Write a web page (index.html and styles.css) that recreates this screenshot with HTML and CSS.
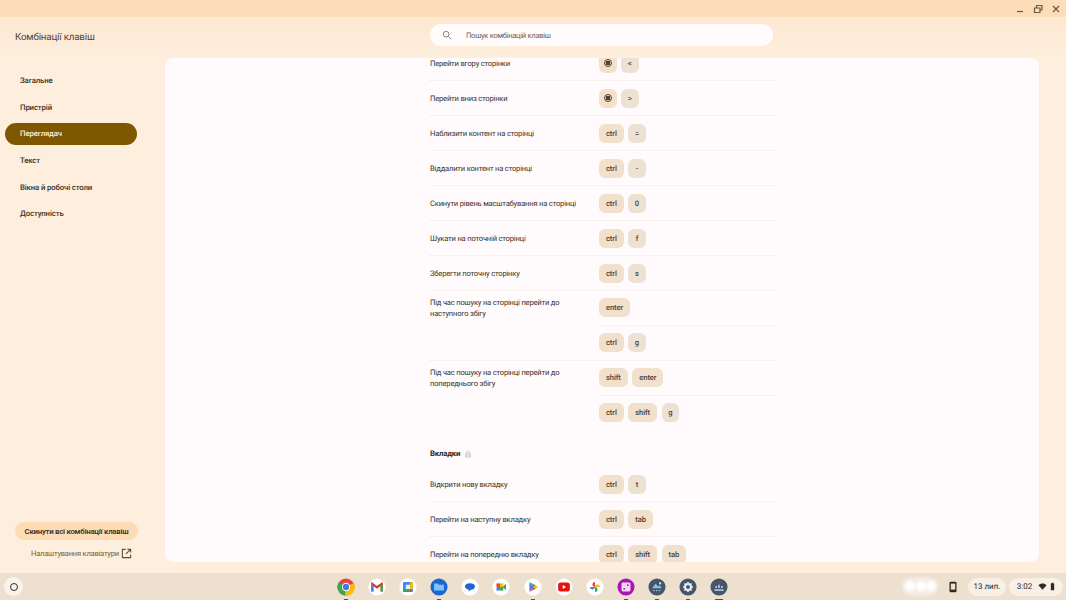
FILE: index.html
```html
<!DOCTYPE html>
<html lang="uk">
<head>
<meta charset="utf-8">
<title>Комбінації клавіш</title>
<link rel="stylesheet" href="styles.css">
</head>
<body>
<div class="titlebar">
  <svg class="win-icon" viewBox="0 0 10 10"><path d="M2 7.500h6" /></svg>
  <svg class="win-icon" viewBox="0 0 10 10"><path d="M1.500 4h5.500v4.500h-5.500zM3.500 4V1.500h5.500V6H7" /></svg>
  <svg class="win-icon" viewBox="0 0 10 10"><path d="M2 2l6 6M8 2l-6 6" /></svg>
</div>
<div class="app">
  <aside class="sidebar">
    <h1 class="app-title">Комбінації клавіш</h1>
    <nav class="nav">
      <a class="nav-item">Загальне</a>
      <a class="nav-item">Пристрій</a>
      <a class="nav-item active">Переглядач</a>
      <a class="nav-item">Текст</a>
      <a class="nav-item">Вікна й робочі столи</a>
      <a class="nav-item">Доступність</a>
    </nav>
    <div class="side-foot">
      <button class="reset">Скинути всі комбінації клавіш</button>
      <a class="kb-link"><span>Налаштування клавіатури</span><svg class="ext" viewBox="0 0 12 12"><path d="M5 1.500H1.500v9h9V7M7 1.500h3.500V5M10.500 1.500L5.500 6.500" /></svg></a>
    </div>
  </aside>
  <main class="main">
    <header class="search-wrap">
      <div class="search">
        <svg class="search-icon" viewBox="0 0 12 12"><circle cx="5" cy="5" r="3.400" /><path d="M7.500 7.500l3.500 3.500" /></svg>
        <span>Пошук комбінацій клавіш</span>
      </div>
    </header>
    <section class="panel">
      <div class="list">
        <div class="row"><div class="label">Перейти вгору сторінки</div><div class="keys"><div class="combo"><span class="key sq launcher-key"><i class="dot"></i></span><span class="key sq glyph">&lt;</span></div></div></div>
        <div class="row"><div class="label">Перейти вниз сторінки</div><div class="keys"><div class="combo"><span class="key sq launcher-key"><i class="dot"></i></span><span class="key sq glyph">&gt;</span></div></div></div>
        <div class="row"><div class="label">Наблизити контент на сторінці</div><div class="keys"><div class="combo"><span class="key">ctrl</span><span class="key sq">=</span></div></div></div>
        <div class="row"><div class="label">Віддалити контент на сторінці</div><div class="keys"><div class="combo"><span class="key">ctrl</span><span class="key sq">-</span></div></div></div>
        <div class="row"><div class="label">Скинути рівень масштабування на сторінці</div><div class="keys"><div class="combo"><span class="key">ctrl</span><span class="key sq">0</span></div></div></div>
        <div class="row"><div class="label">Шукати на поточній сторінці</div><div class="keys"><div class="combo"><span class="key">ctrl</span><span class="key sq">f</span></div></div></div>
        <div class="row"><div class="label">Зберегти поточну сторінку</div><div class="keys"><div class="combo"><span class="key">ctrl</span><span class="key sq">s</span></div></div></div>
        <div class="row multi"><div class="label">Під час пошуку на сторінці перейти до наступного збігу</div><div class="keys"><div class="combo"><span class="key">enter</span></div><div class="combo"><span class="key">ctrl</span><span class="key sq">g</span></div></div></div>
        <div class="row multi last"><div class="label">Під час пошуку на сторінці перейти до попереднього збігу</div><div class="keys"><div class="combo"><span class="key">shift</span><span class="key">enter</span></div><div class="combo"><span class="key">ctrl</span><span class="key">shift</span><span class="key sq">g</span></div></div></div>
        <h2 class="section">Вкладки
          <svg class="lock" viewBox="0 0 10 10"><path d="M2 4.500h6v4.500H2zM3.300 4.500V3a1.700 1.700 0 0 1 3.400 0v1.500M2 6.200h6M2 7.600h6" /></svg>
        </h2>
        <div class="row"><div class="label">Відкрити нову вкладку</div><div class="keys"><div class="combo"><span class="key">ctrl</span><span class="key sq">t</span></div></div></div>
        <div class="row"><div class="label">Перейти на наступну вкладку</div><div class="keys"><div class="combo"><span class="key">ctrl</span><span class="key">tab</span></div></div></div>
        <div class="row"><div class="label">Перейти на попередню вкладку</div><div class="keys"><div class="combo"><span class="key">ctrl</span><span class="key">shift</span><span class="key">tab</span></div></div></div>
      </div>
    </section>
  </main>
</div>
<footer class="shelf">
  <div class="launcher"><i class="ring"></i></div>
  <div class="dock">
    <div class="app-icon run">
      <svg viewBox="0 0 20 20"><circle cx="10" cy="10" r="9.500" fill="#e8453c"/><path d="M10 10L1.800 14.800A9.500 9.500 0 0 1 2 5z" fill="#34a853"/><path d="M10 10l8.400-4.400A9.500 9.500 0 0 1 9 19.500L1.800 14.800z" fill="#fbbc04"/><path d="M10 10l-1 9.500a9.500 9.500 0 0 1-7.200-4.700z" fill="#34a853"/><circle cx="10" cy="10" r="4.600" fill="#fff"/><circle cx="10" cy="10" r="3.500" fill="#3b7de8"/></svg>
    </div>
    <div class="app-icon">
      <svg viewBox="0 0 20 20"><circle cx="10" cy="10" r="9.500" fill="#fff"/><path d="M4.800 15V6.500l5.200 4 5.200-4V15" fill="none" stroke="#d9342b" stroke-width="2.400"/><path d="M4.800 15V7.500" stroke="#4285f4" stroke-width="2.400"/><path d="M15.200 15V7.500" stroke="#34a853" stroke-width="2.400"/></svg>
    </div>
    <div class="app-icon">
      <svg viewBox="0 0 20 20"><circle cx="10" cy="10" r="9.500" fill="#fff"/><rect x="4.500" y="4.500" width="11" height="11" fill="#4285f4"/><rect x="7.500" y="7.500" width="5" height="5" fill="#e6f0fb"/><path d="M12.500 12.500h3l-3 3z" fill="#ea4335"/><rect x="4.500" y="12.500" width="8" height="3" fill="#34a853"/><rect x="12.500" y="4.500" width="3" height="8" fill="#fbbc04"/></svg>
    </div>
    <div class="app-icon run">
      <svg viewBox="0 0 20 20"><circle cx="10" cy="10" r="9.500" fill="#1a67d2"/><path d="M4.500 6h4.200l1.300 1.500h5.500v6.500h-11z" fill="#7fc4f5"/></svg>
    </div>
    <div class="app-icon">
      <svg viewBox="0 0 20 20"><circle cx="10" cy="10" r="9.500" fill="#fff"/><path d="M4.500 9.500c0-2.300 2.400-3.600 5.500-3.600s5.500 1.300 5.500 3.600-2.400 3.600-4.500 3.600L8.500 15v-2.100c-2.300-.3-4-1.500-4-3.400z" fill="#1a67d2"/></svg>
    </div>
    <div class="app-icon">
      <svg viewBox="0 0 20 20"><circle cx="10" cy="10" r="9.500" fill="#fff"/><rect x="5" y="6" width="4" height="4" fill="#ea4335"/><rect x="5" y="10" width="4" height="4" fill="#4285f4"/><rect x="9" y="6" width="3.500" height="4" fill="#fbbc04"/><rect x="9" y="10" width="3.500" height="4" fill="#34a853"/><path d="M12.500 9l3-2.300v6.600l-3-2.300z" fill="#34a853"/></svg>
    </div>
    <div class="app-icon run">
      <svg viewBox="0 0 20 20"><circle cx="10" cy="10" r="9.500" fill="#fff"/><path d="M6 4.800v10.400L11 10z" fill="#4285f4"/><path d="M6 4.800L11 10l2-2z" fill="#34a853"/><path d="M6 15.200L11 10l2 2z" fill="#ea4335"/><path d="M13 8l2.600 2-2.600 2-2-2z" fill="#fbbc04"/></svg>
    </div>
    <div class="app-icon">
      <svg viewBox="0 0 20 20"><circle cx="10" cy="10" r="9.500" fill="#fff"/><rect x="3.500" y="5" width="13" height="10" rx="2.600" fill="#e8120c"/><path d="M8.600 7.800v4.400l3.600-2.200z" fill="#fff"/></svg>
    </div>
    <div class="app-icon">
      <svg viewBox="0 0 20 20"><circle cx="10" cy="10" r="9.500" fill="#fff"/><path d="M10 10V4.500a2.800 2.800 0 0 0-2.800 2.800c0 1.500 1.300 2.700 2.800 2.700z" fill="#ea4335"/><path d="M10 10h5.500a2.800 2.800 0 0 0-2.800-2.800C11.200 7.200 10 8.500 10 10z" fill="#fbbc04"/><path d="M10 10v5.500a2.800 2.800 0 0 0 2.800-2.800c0-1.500-1.300-2.700-2.800-2.700z" fill="#34a853"/><path d="M10 10H4.500a2.800 2.800 0 0 0 2.800 2.800c1.500 0 2.700-1.300 2.700-2.800z" fill="#4285f4"/></svg>
    </div>
    <div class="app-icon run">
      <svg viewBox="0 0 20 20"><circle cx="10" cy="10" r="9.500" fill="#a815b5"/><rect x="5" y="5" width="10" height="10" rx="1.600" fill="#f6d6f2"/><circle cx="12" cy="8" r="1" fill="#a815b5"/><circle cx="8" cy="12" r="1" fill="#a815b5"/></svg>
    </div>
    <div class="app-icon run">
      <svg viewBox="0 0 20 20"><circle cx="10" cy="10" r="9.500" fill="#475569"/><path d="M4.500 11.500L8.500 6.500l3 3 1.500-1.500 2.500 3.500z" fill="#7cc4f8"/><circle cx="13.500" cy="6" r="1.200" fill="#e4eefb"/><path d="M6 14h1.500M9 14h1.500M12 14h1.500" stroke="#dbe5f2" stroke-width="1"/></svg>
    </div>
    <div class="app-icon run">
      <svg viewBox="0 0 20 20"><circle cx="10" cy="10" r="9.500" fill="#475569"/><circle cx="10" cy="10" r="3.300" fill="none" stroke="#e8eef6" stroke-width="2.200"/><path d="M10 4.500v2M10 13.500v2M4.500 10h2M13.500 10h2M6.100 6.100l1.400 1.400M12.500 12.500l1.400 1.400M13.900 6.100l-1.400 1.400M7.500 12.500l-1.400 1.400" stroke="#e8eef6" stroke-width="1.800"/></svg>
    </div>
    <div class="app-icon run wide-run">
      <svg viewBox="0 0 20 20"><circle cx="10" cy="10" r="9.500" fill="#475569"/><path d="M5 12.500h10v1.800H5z" fill="#a9cdf2"/><path d="M6 9h1.500v2H6zM9.200 7.500h1.500v3.500H9.200zM12.500 9H14v2h-1.500z" fill="#cfe2f7"/></svg>
    </div>
  </div>
  <div class="tray">
    <div class="blob"></div>
    <svg class="phone" viewBox="0 0 10 12"><rect x="1.500" y="0.800" width="7" height="10.400" rx="1.200" fill="#2f2a24"/><rect x="2.800" y="2.600" width="4.400" height="6" fill="#efe1d0"/></svg>
    <div class="pill date">13 лип.</div>
    <div class="pill time">
      <span>3:02</span>
      <svg class="wifi" viewBox="0 0 10 10"><path d="M0.500 3.500C3 1 7 1 9.500 3.500L5 8.500z" fill="#2f2a24"/></svg>
      <svg class="batt" viewBox="0 0 6 10"><path d="M2 .5h2v1h1v8H1v-8h1z" fill="#2f2a24"/></svg>
    </div>
  </div>
</footer>
</body>
</html>
```
FILE: styles.css
```css
* { box-sizing: border-box; }
html, body { margin: 0; padding: 0; }
body {
  width: 1066px;
  height: 600px;
  overflow: hidden;
  display: flex;
  flex-direction: column;
  font-family: Roboto, Inter, sans-serif;
  text-rendering: geometricPrecision;
  color: #3a3229;
  background: #feeedd;
}
.titlebar {
  height: 17px;
  flex: none;
  background: #fddcb9;
  display: flex;
  justify-content: flex-end;
  align-items: center;
  gap: 8px;
  padding: 0 5px 0 0;
}
.win-icon {
  width: 10px;
  height: 10px;
  fill: none;
  stroke: #6a5a45;
  stroke-width: 1.200;
}
.app {
  flex: 1;
  display: flex;
  min-height: 0;
  background: linear-gradient(#fde8d1, #feeedd 41px);
}
.sidebar {
  width: 165px;
  flex: none;
  display: flex;
  flex-direction: column;
}
.app-title {
  margin: 14.500px 0 0 15px;
  font-size: 9.800px;
  letter-spacing: -.2px;
  line-height: 12px;
  font-weight: 400;
  color: #4f4539;
}
.nav {
  margin-top: 26.500px;
  display: flex;
  flex-direction: column;
  gap: 4.700px;
}
.nav-item {
  height: 22px;
  width: 132.500px;
  margin-left: 4.500px;
  padding-left: 15.500px;
  border-radius: 11px;
  font-size: 7.800px;
  letter-spacing: -.15px;
  line-height: 22px;
  font-weight: 500;
  color: #3a3229;
}
.nav-item.active { background: #7f5700; color: #fff0dc; }
.side-foot {
  margin-top: auto;
  padding: 0 0 14px 15px;
  display: flex;
  flex-direction: column;
  align-items: flex-start;
  gap: 8px;
}
.reset {
  width: 123px;
  height: 18px;
  border: 0;
  padding: 0;
  border-radius: 9px;
  background: #fddcb5;
  font-family: inherit;
  font-size: 7.800px;
  letter-spacing: -.25px;
  font-weight: 600;
  color: #3a3229;
}
.kb-link {
  display: flex;
  align-items: center;
  gap: 2px;
  margin-left: 16px;
  font-size: 7.600px;
  letter-spacing: -.25px;
  color: #7a5f30;
}
.ext { width: 11px; height: 11px; fill: none; stroke: #5f4f33; stroke-width: 1.200; }
.main {
  flex: 1;
  min-width: 0;
  display: flex;
  flex-direction: column;
  padding: 0 27px 11px 0;
}
.search-wrap { height: 41px; flex: none; padding: 7px 0 0 265px; }
.search {
  width: 343px;
  height: 22px;
  border-radius: 11px;
  background: #fffcfb;
  display: flex;
  align-items: center;
  padding-left: 12px;
  gap: 14px;
  font-size: 7.600px;
  letter-spacing: -.3px;
  color: #6a6058;
}
.search-icon { width: 10px; height: 10px; fill: none; stroke: #8a827a; stroke-width: 1.200; }
.panel {
  flex: 1;
  min-height: 0;
  background: #fffbfc;
  border-radius: 8px;
  overflow: hidden;
}
.list { width: 346px; margin: -12px 0 0 264px; }
.row {
  display: flex;
  align-items: center;
  min-height: 35px;
  border-bottom: 1px solid #f7f0ec;
}
.row.last { border-bottom: 0; }
.row.multi { align-items: flex-start; }
.label {
  width: 170px;
  flex: none;
  padding-left: 1px;
  font-size: 7.600px;
  letter-spacing: -.2px;
  line-height: 11px;
  color: #3a3229;
}
.multi .label { padding-top: 6px; }
.keys { flex: 1; display: flex; flex-direction: column; }
.combo { display: flex; align-items: center; gap: 4.500px; height: 34px; }
.multi .combo:first-child { height: 35px; padding-bottom: 1px; border-bottom: 1px solid #f7f0ec; }
.multi .combo:last-child { height: 33.500px; }
.key {
  height: 19px;
  padding: 0 7px;
  border-radius: 6px;
  background: #f1e0cc;
  display: flex;
  align-items: center;
  justify-content: center;
  font-size: 7.600px;
  letter-spacing: -.1px;
  font-weight: 500;
  color: #4d4337;
}
.key.sq { padding: 0; width: 17.500px; background: #ede1d4; }
.key.glyph { font-size: 8px; font-weight: 500; }
.key.launcher-key { background: #f5e0c9; }
.dot {
  width: 8px;
  height: 8px;
  border-radius: 50%;
  border: 1px solid #4d4337;
  background: radial-gradient(#4d4337 0 2.200px, transparent 2.600px);
}
.section {
  margin: 0;
  height: 38px;
  padding: 11px 0 0 1px;
  display: flex;
  align-items: center;
  gap: 4px;
  font-size: 7.800px;
  letter-spacing: -.2px;
  font-weight: 700;
  color: #2f2a24;
}
.lock { width: 8px; height: 8px; fill: none; stroke: #b9b1aa; stroke-width: .7; }
.shelf {
  height: 27px;
  flex: none;
  position: relative;
  background: #eee0cf;
  display: flex;
  align-items: center;
  padding-left: 4px;
}
.launcher {
  width: 19px;
  height: 19px;
  border-radius: 50%;
  background: #f9f3ec;
  display: flex;
  align-items: center;
  justify-content: center;
}
.ring { width: 8px; height: 8px; border-radius: 50%; border: 1.500px solid #2f2a24; }
.dock {
  margin-left: 314px;
  display: flex;
  gap: 13.100px;
  align-items: center;
}
.app-icon { width: 18px; height: 18px; position: relative; }
.app-icon svg { display: block; width: 18px; height: 18px; }
.app-icon.run::after {
  content: "";
  position: absolute;
  left: 7px;
  bottom: -4px;
  width: 4px;
  height: 1px;
  background: #55504a;
}
.app-icon.wide-run::after { left: 5px; width: 8px; }
.tray {
  margin-left: auto;
  padding-right: 3px;
  display: flex;
  align-items: center;
}
.blob {
  width: 36px;
  height: 19px;
  border-radius: 10px;
  background:
    radial-gradient(circle at 8px 9px, #fff 0 4px, transparent 6px),
    radial-gradient(circle at 19px 9px, #fff 0 4px, transparent 6px),
    radial-gradient(circle at 29px 9px, #fff 0 4px, transparent 6px),
    #f3ece5;
  filter: blur(1px);
}
.phone { width: 10px; height: 12px; margin-left: 10px; }
.pill {
  height: 18px;
  border-radius: 9px;
  background: #f8efe6;
  display: flex;
  align-items: center;
  justify-content: center;
  font-size: 8px;
  color: #2f2a24;
}
.date { width: 38px; margin-left: 10px; }
.time { width: 54px; margin-left: 3px; gap: 3px; }
.wifi { width: 9px; height: 9px; margin-left: 3px; }
.batt { width: 5px; height: 9px; }
```
